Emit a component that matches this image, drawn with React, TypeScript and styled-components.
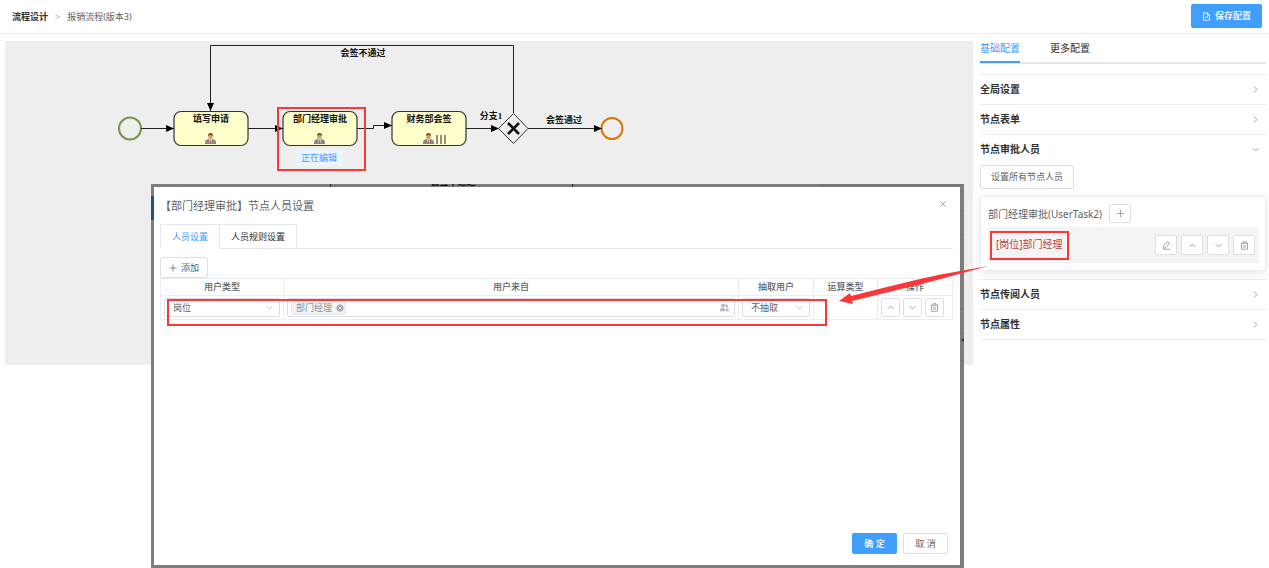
import React from "react";
import styled, { createGlobalStyle, css } from "styled-components";

const sans = `"Noto Sans", "Noto Sans CJK SC", sans-serif`;
const c = {
  primary: "#409eff",
  title: "#303133",
  text: "#606266",
  muted: "#909399",
  border: "#dcdfe6",
  line: "#ebeef5",
  mark: "#fb3838",
};

const Global = createGlobalStyle`
  * { box-sizing: border-box; }
  body { margin: 0; background: #fff; color: ${c.text}; font: 9px/14px ${sans}; }
  button, input, select { font: inherit; color: inherit; margin: 0; }
  h1, h2, h3, p { margin: 0; font-weight: 400; }
`;

const Page = styled.div`
  position: relative;
  min-height: 100vh;
  overflow: hidden;
`;
const Header = styled.header`
  display: flex;
  align-items: center;
  justify-content: space-between;
  height: 34px;
  padding: 0 7px 1px 12px;
  border-bottom: 1px solid #eee;
`;
const Crumbs = styled.nav`
  display: flex;
  gap: 7px;
  padding-top: 2px;
  color: ${c.text};
`;
const CrumbLink = styled.a`
  color: ${c.title};
  font-weight: 700;
  text-decoration: none;
`;
const CrumbSep = styled.span`
  color: #a8abb2;
`;
const Main = styled.main`
  display: flex;
  align-items: flex-start;
  gap: 7px;
  padding: 7px 3px 0 5px;
`;

const Button = styled.button<{ $primary?: boolean; $w?: number; $h?: number; $strong?: boolean }>`
  display: inline-flex;
  align-items: center;
  justify-content: center;
  gap: 4px;
  flex: none;
  width: ${(p) => (p.$w ? `${p.$w}px` : "auto")};
  height: ${(p) => p.$h ?? 24}px;
  padding: 0;
  border: 1px solid ${(p) => (p.$primary ? c.primary : c.border)};
  border-radius: 2px;
  background: ${(p) => (p.$primary ? c.primary : "#fff")};
  color: ${(p) => (p.$primary ? "#fff" : c.text)};
  font-weight: ${(p) => (p.$strong ? 500 : 400)};
  white-space: nowrap;
  cursor: pointer;
`;
const Canvas = styled.section`
  flex: 1;
  min-width: 0;
  height: 324px;
  background: #eee;
`;
const Diagram = styled.svg`
  display: block;
  width: 100%;
  height: 100%;
`;
const NodeText = styled.text`
  font: 700 9px "Liberation Serif", "Noto Sans CJK SC", serif;
  fill: #111;
  text-anchor: middle;
`;
const StatusText = styled.text`
  font: 9px ${sans};
  fill: ${c.primary};
  text-anchor: middle;
`;

const Sidebar = styled.aside`
  width: 286px;
  flex: none;
`;
const SideTabs = styled.div`
  display: flex;
  gap: 30px;
  height: 23px;
  border-bottom: 2px solid #e4e7ed;
`;
const SideTab = styled.button<{ $active?: boolean }>`
  height: 22px;
  padding: 0 0 6px;
  border: 0;
  border-bottom: 2px solid ${(p) => (p.$active ? c.primary : "transparent")};
  background: none;
  color: ${(p) => (p.$active ? c.primary : c.title)};
  font-size: 10px;
  line-height: 14px;
`;
const Accordion = styled.div`
  margin-top: 10px;
  border-top: 1px solid ${c.line};
`;
const Item = styled.section`
  border-bottom: 1px solid ${c.line};
`;
const ItemHead = styled.button`
  display: flex;
  align-items: center;
  justify-content: space-between;
  width: 100%;
  height: 29px;
  padding: 0 6px 1px 0;
  border: 0;
  background: none;
  color: ${c.title};
  font-size: 10px;
  font-weight: 700;
`;
const ItemBody = styled.div`
  display: flex;
  flex-direction: column;
  align-items: flex-start;
  gap: 7px;
  padding: 1px 0 8px;
`;
const Card = styled.div`
  width: 100%;
  height: 75px;
  padding: 7px 6px 8px 7px;
  border: 1px solid ${c.line};
  border-radius: 2px;
  background: #fff;
  box-shadow: 0 2px 8px rgba(0, 0, 0, 0.1);
`;
const CardTitle = styled.div`
  display: flex;
  align-items: center;
  gap: 7px;
  font-size: 10px;
`;
const Assignee = styled.div`
  display: flex;
  align-items: center;
  justify-content: space-between;
  height: 36px;
  margin-top: 4px;
  padding: 0 4px 0 2px;
  border-radius: 2px;
  background: #f4f4f5;
`;
const Marked = styled.span`
  height: 29px;
  padding: 4px 4px;
  border: 2px solid ${c.mark};
  color: #b4474a;
  font-size: 10px;
  line-height: 15px;
`;
const Actions = styled.div<{ $gap: number }>`
  display: flex;
  gap: ${(p) => p.$gap}px;
`;

const Shot = styled.div`
  position: absolute;
  top: 184px;
  bottom: 0;
  left: 151px;
  right: 305px;
  display: flex;
  padding: 3px 4px 3px 3px;
  background: #7d7d7d;
  overflow: hidden;
`;
const Behind = styled.svg`
  position: absolute;
  inset: 0;
  width: 100%;
  height: 100%;
`;
const Dialog = styled.section`
  position: relative;
  display: flex;
  flex-direction: column;
  flex: 1;
  min-width: 0;
  padding: 0 7px 11px 6px;
  background: #fff;
`;
const DialogHead = styled.header`
  display: flex;
  justify-content: space-between;
  height: 37px;
  padding: 11px 5px 0 0;
`;
const DialogTitle = styled.h2`
  color: ${c.text};
  font-size: 11px;
  line-height: 16px;
`;
const Close = styled.button`
  width: 10px;
  height: 12px;
  padding: 0;
  border: 0;
  background: none;
  color: ${c.muted};
`;
const Tabs = styled.div`
  display: flex;
  height: 25px;
  border-bottom: 1px solid #e4e7ed;
`;
const Tab = styled.button<{ $active?: boolean }>`
  width: ${(p) => (p.$active ? 60 : 77)}px;
  height: 25px;
  padding: 0;
  border: 1px solid #e4e7ed;
  border-left-width: ${(p) => (p.$active ? 1 : 0)}px;
  background: #fff;
  color: ${c.title};
  ${(p) =>
    p.$active &&
    css`
      border-bottom-color: #fff;
      color: ${c.primary};
    `}
`;
const Toolbar = styled.div`
  display: flex;
  padding-top: 8px;
`;
const Table = styled.table`
  width: 100%;
  table-layout: fixed;
  border-collapse: collapse;
  th,
  td {
    border: 1px solid ${c.line};
    padding: 0 3px;
  }
  th {
    height: 17px;
    font-weight: 500;
    line-height: 14px;
  }
  td {
    height: 24px;
  }
`;
const Col = styled.col<{ $w?: number }>`
  width: ${(p) => (p.$w ? `${p.$w}px` : "auto")};
`;
const Field = styled.div`
  position: relative;
  display: flex;
  align-items: center;
  justify-content: space-between;
  height: 19px;
  border: 1px solid ${c.border};
  border-radius: 2px;
  padding-right: 5px;
  background: #fff;
`;
const Select = styled.select<{ $indent: number }>`
  flex: 1;
  min-width: 0;
  height: 17px;
  padding: 0 0 0 ${(p) => p.$indent}px;
  border: 0;
  background: none;
  appearance: none;
  line-height: 14px;
`;
const Tag = styled.span`
  display: inline-flex;
  align-items: center;
  gap: 4px;
  height: 14px;
  margin-left: 3px;
  padding: 0 1px 0 4px;
  border: 1px solid #e9e9eb;
  border-radius: 2px;
  background: #f0f2f5;
  color: ${c.muted};
`;
const TableMark = styled.div`
  position: absolute;
  top: 112px;
  left: 13px;
  right: 133px;
  height: 27px;
  border: 2px solid ${c.mark};
  pointer-events: none;
`;
const DialogFoot = styled.footer`
  display: flex;
  justify-content: flex-end;
  gap: 6px;
  margin-top: auto;
  padding-right: 5px;
`;
const Arrow = styled.svg`
  position: absolute;
  top: 264px;
  right: 280px;
  width: 151px;
  height: 42px;
  pointer-events: none;
`;

const paths = {
  up: "M2 8 6 4l4 4",
  down: "M2 4l4 4 4-4",
  right: "M4 2l4 4-4 4",
  plus: "M6 1v10M1 6h10",
  close: "M2 2l8 8M10 2l-8 8",
  trash: "M1 3h10M4 3V1h4v2M2 3v8h8V3M5 5v4M7 5v4",
  edit: "M7 1l3 2-5 6-3 1v-3zM2 11h9",
  doc: "M2 1h5l3 3v7H2zM7 1v3h3M4 7l2 1 2-3",
};
function Icon({ name, size = 9, color = "currentColor" }: { name: keyof typeof paths; size?: number; color?: string }) {
  return (
    <svg width={size} height={size} viewBox="0 0 12 12" fill="none" stroke={color} strokeWidth={1.1} aria-hidden>
      <path d={paths[name]} />
    </svg>
  );
}

function Person({ x, y }: { x: number; y: number }) {
  return (
    <g transform={`translate(${x} ${y})`}>
      <path d="M0 11V9q0-2 3-3h5q3 1 3 3v2z" fill="#8b8790" />
      <path d="M4 6h3l-1 5H5z" fill="#f3e9e0" />
      <ellipse cx="5.5" cy="3.5" rx="2.3" ry="3" fill="#d9a36c" />
      <path d="M3 3q0-3 2.500-3T8 3Q5.500 1 3 3z" fill="#7c4b26" />
      <path d="M5 7h1v4H5z" fill="#b0714c" />
    </g>
  );
}

function Task({ x, label, multi }: { x: number; label: string; multi?: boolean }) {
  return (
    <g>
      <rect x={x} y="70.500" width="74" height="34" rx="7" fill="#ffc" stroke="#333" strokeWidth="1.2" />
      <NodeText x={x + 37} y="81">{label}</NodeText>
      <Person x={x + 31} y={92} />
      {multi && <path d={`M${x + 45} 94v9M${x + 49} 94v9M${x + 53} 94v9`} stroke="#222" />}
    </g>
  );
}

function Flow() {
  return (
    <Diagram role="img" aria-label="报销流程">
      <defs>
        <marker id="tip" viewBox="0 0 8 7" refX="8" refY="3.500" markerWidth="8" markerHeight="7" markerUnits="userSpaceOnUse" orient="auto">
          <path d="M0 0 8 3.500 0 7z" />
        </marker>
      </defs>
      <circle cx="125" cy="87.500" r="11" fill="none" stroke="#75984a" strokeWidth="2" />
      <Task x={169} label="填写申请" />
      <Task x={278} label="部门经理审批" />
      <Task x={387} label="财务部会签" multi />
      <path d="M508.500 72.500 523 87.500 508.500 102.500 493.500 87.500z" fill="#eee" stroke="#333" />
      <path d="m503 82 11 11M514 82l-11 11" stroke="#111" strokeWidth="2.6" />
      <circle cx="607" cy="87.500" r="10.500" fill="none" stroke="#d67808" strokeWidth="2" />
      <g fill="none" stroke="#222">
        <path d="M136 87.500H169" markerEnd="url(#tip)" />
        <path d="M243 87.500H278" markerEnd="url(#tip)" />
        <path d="M352 87.500H368.500V84.500H387" markerEnd="url(#tip)" />
        <path d="M461 87.500H494" markerEnd="url(#tip)" />
        <path d="M523 87.500H597" markerEnd="url(#tip)" />
        <path d="M508.500 72V4.500H205.500V70" markerEnd="url(#tip)" />
      </g>
      <NodeText x="358" y="15">会签不通过</NodeText>
      <NodeText x="486" y="78">分支1</NodeText>
      <NodeText x="559" y="82">会签通过</NodeText>
      <rect x="291" y="108" width="47" height="17" rx="2" fill="#ecf5ff" />
      <StatusText x="314" y="120">正在编辑</StatusText>
      <rect x="273" y="67" width="87" height="62" fill="none" stroke={c.mark} strokeWidth="2" />
    </Diagram>
  );
}

function Section({ title, open, children }: { title: string; open?: boolean; children?: React.ReactNode }) {
  return (
    <Item>
      <ItemHead type="button" aria-expanded={!!open}>
        {title}
        <Icon name={open ? "down" : "right"} size={9} color={c.muted} />
      </ItemHead>
      {children && <ItemBody>{children}</ItemBody>}
    </Item>
  );
}

function PersonnelDialog() {
  return (
    <Shot>
      <Behind aria-hidden>
        <rect x="0" y="12" width="3" height="24" fill="#1f5489" />
        <path d="M179.500 0v3M421.500 0v3" stroke="#222" />
        <NodeText x="302" y="1">会签不通过</NodeText>
        <path d="M668 1h145M809 26h4M809 50h4M809 125h4M809 150h4M809 176h4" stroke="#737373" />
        <circle cx="812" cy="156" r="1.500" fill="#333" />
      </Behind>
      <Dialog role="dialog" aria-label="节点人员设置">
        <DialogHead>
          <DialogTitle>【部门经理审批】节点人员设置</DialogTitle>
          <Close type="button" aria-label="关闭">
            <Icon name="close" size={8} />
          </Close>
        </DialogHead>
        <Tabs role="tablist">
          <Tab role="tab" $active>人员设置</Tab>
          <Tab role="tab">人员规则设置</Tab>
        </Tabs>
        <Toolbar>
          <Button type="button" $w={48} $h={21}>
            <Icon name="plus" size={8} />添加
          </Button>
        </Toolbar>
        <Table>
          <colgroup>
            <Col $w={123} />
            <Col />
            <Col $w={75} />
            <Col $w={64} />
            <Col $w={75} />
          </colgroup>
          <thead>
            <tr>
              <th>用户类型</th>
              <th>用户来自</th>
              <th>抽取用户</th>
              <th>运算类型</th>
              <th>操作</th>
            </tr>
          </thead>
          <tbody>
            <tr>
              <td>
                <Field>
                  <Select $indent={8} aria-label="用户类型" defaultValue="岗位">
                    <option>岗位</option>
                  </Select>
                  <Icon name="down" size={9} color="#b4b8bf" />
                </Field>
              </td>
              <td>
                <Field>
                  <Tag>
                    部门经理
                    <svg width="8" height="8" viewBox="0 0 8 8" aria-hidden>
                      <circle cx="4" cy="4" r="3.500" fill="#a3a6ac" />
                      <path d="m2.500 2.500 3 3m0-3-3 3" stroke="#dcdde0" />
                    </svg>
                  </Tag>
                  <svg width="9" height="9" viewBox="0 0 12 12" fill="#b4b8c4" aria-hidden>
                    <circle cx="4" cy="3" r="2.500" />
                    <circle cx="9" cy="4" r="2" />
                    <path d="M0 11q0-5 4-5 2 0 3 2v3zM8 11V7q4 0 4 4z" />
                  </svg>
                </Field>
              </td>
              <td>
                <Field>
                  <Select $indent={8} aria-label="抽取用户" defaultValue="不抽取">
                    <option>不抽取</option>
                  </Select>
                  <Icon name="down" size={9} color="#b4b8bf" />
                </Field>
              </td>
              <td />
              <td>
                <Actions $gap={3}>
                  <Button type="button" aria-label="上移" $w={19} $h={19}><Icon name="up" color={c.muted} /></Button>
                  <Button type="button" aria-label="下移" $w={19} $h={19}><Icon name="down" color={c.muted} /></Button>
                  <Button type="button" aria-label="删除" $w={19} $h={19}><Icon name="trash" color={c.muted} /></Button>
                </Actions>
              </td>
            </tr>
          </tbody>
        </Table>
        <TableMark />
        <DialogFoot>
          <Button type="button" $primary $strong $w={45} $h={21}>确 定</Button>
          <Button type="button" $w={45} $h={21}>取 消</Button>
        </DialogFoot>
      </Dialog>
    </Shot>
  );
}

export default function App() {
  return (
    <Page>
      <Global />
      <Header>
        <Crumbs aria-label="breadcrumb">
          <CrumbLink href="#design">流程设计</CrumbLink>
          <CrumbSep>&gt;</CrumbSep>
          <span>报销流程(版本3)</span>
        </Crumbs>
        <Button type="button" $primary $strong $w={71}>
          <Icon name="doc" size={9} />保存配置
        </Button>
      </Header>
      <Main>
        <Canvas>
          <Flow />
        </Canvas>
        <Sidebar>
          <SideTabs role="tablist">
            <SideTab role="tab" $active>基础配置</SideTab>
            <SideTab role="tab">更多配置</SideTab>
          </SideTabs>
          <Accordion>
            <Section title="全局设置" />
            <Section title="节点表单" />
            <Section title="节点审批人员" open>
              <Button type="button" $w={94}>设置所有节点人员</Button>
              <Card>
                <CardTitle>
                  部门经理审批(UserTask2)
                  <Button type="button" aria-label="添加人员" $w={22} $h={19}><Icon name="plus" color={c.muted} /></Button>
                </CardTitle>
                <Assignee>
                  <Marked>[岗位]部门经理</Marked>
                  <Actions $gap={4}>
                    <Button type="button" aria-label="编辑" $w={22} $h={20}><Icon name="edit" color={c.muted} /></Button>
                    <Button type="button" aria-label="上移" $w={22} $h={20}><Icon name="up" color={c.muted} /></Button>
                    <Button type="button" aria-label="下移" $w={22} $h={20}><Icon name="down" color={c.muted} /></Button>
                    <Button type="button" aria-label="删除" $w={22} $h={20}><Icon name="trash" color={c.muted} /></Button>
                  </Actions>
                </Assignee>
              </Card>
            </Section>
            <Section title="节点传阅人员" />
            <Section title="节点属性" />
          </Accordion>
        </Sidebar>
      </Main>
      <PersonnelDialog />
      <Arrow viewBox="0 0 151 42" aria-hidden>
        <path d="M1 37 12 29l1 3Q72 17 100 11L150 2 103 15Q72 23 14 37l1 3z" fill={c.mark} />
      </Arrow>
    </Page>
  );
}
